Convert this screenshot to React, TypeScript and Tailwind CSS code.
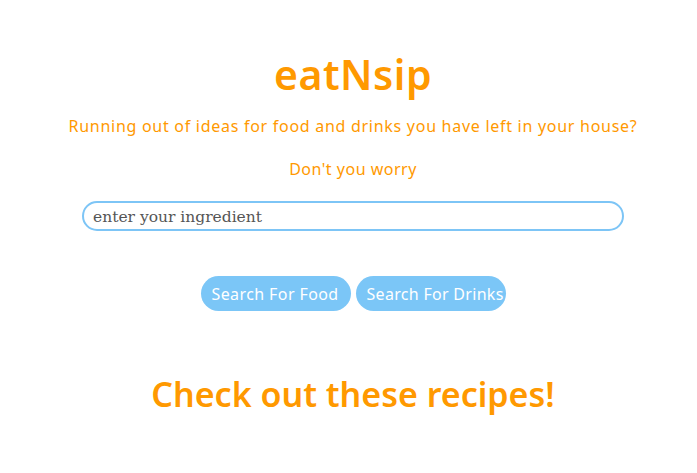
export default function App() {
    return (
        <main className="min-h-screen bg-white pl-[9px] text-center text-[#ff9900]" style={{ fontFamily: '"Noto Sans", "Open Sans", sans-serif' }}>
            <div className="flex flex-col items-center pt-[44px]">
                <h1 className="text-[41px] leading-[60px] font-semibold tracking-[0.5px]">eatNsip</h1>
                <p className="mt-[10px] text-[16px] leading-[24px] tracking-[0.72px]">
                    Running out of ideas for food and drinks you have left in your house?
                </p>
                <p className="mt-[19px] text-[16px] leading-[24px] tracking-[0.5px]">Don't you worry</p>
                <input
                    type="text"
                    placeholder="enter your ingredient"
                    className="mt-[20px] h-[30px] w-[542px] rounded-full border-2 border-[#7dc5f6] bg-white px-[9px] pt-[2px] text-[15.5px] text-[#555] placeholder:text-[#555] outline-none"
                    style={{ fontFamily: '"DejaVu Serif", Georgia, serif' }}
                />
                <div className="mt-[45px] flex gap-[5px]">
                    <button className="h-[35px] w-[150px] shrink-0 overflow-visible whitespace-nowrap rounded-[18px] bg-[#7bc6f7] pl-[11px] text-left text-[16px] tracking-[0.4px] text-white">
                        Search For Food
                    </button>
                    <button className="h-[35px] w-[150px] shrink-0 overflow-visible whitespace-nowrap rounded-[18px] bg-[#7bc6f7] pl-[11px] text-left text-[16px] tracking-[0.3px] text-white">
                        Search For Drinks
                    </button>
                </div>
                <h2 className="mt-[58px] text-[34px] leading-[50px] font-semibold">Check out these recipes!</h2>
            </div>
        </main>
    );
}
